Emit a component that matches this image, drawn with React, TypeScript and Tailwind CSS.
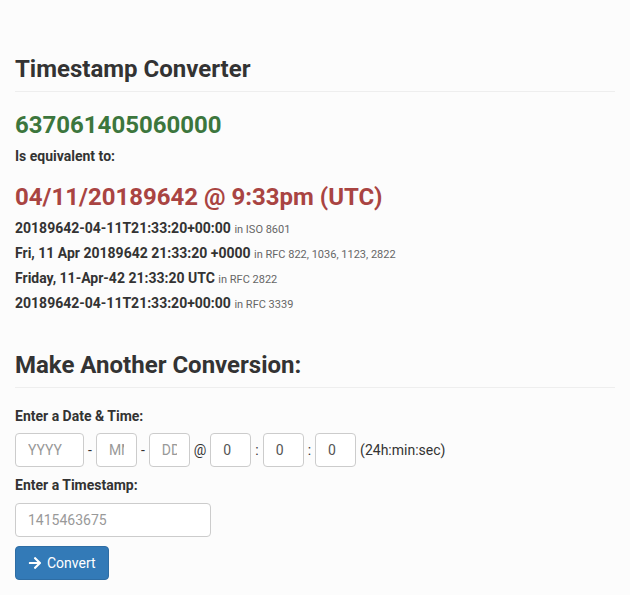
import React from 'react';
import { FaArrowRight } from 'react-icons/fa';

const FORMATS = [
  { value: '20189642-04-11T21:33:20+00:00', note: 'in ISO 8601' },
  { value: 'Fri, 11 Apr 20189642 21:33:20 +0000', note: 'in RFC 822, 1036, 1123, 2822' },
  { value: 'Friday, 11-Apr-42 21:33:20 UTC', note: 'in RFC 2822' },
  { value: '20189642-04-11T21:33:20+00:00', note: 'in RFC 3339' }
];

const inputClass =
  'h-[34px] rounded-[4px] border border-[#ccc] bg-white px-3 text-[14px] text-[#555] placeholder:text-[#999] outline-none';

export default function App() {
  return (
    <div className="min-h-screen bg-[#fcfcfc] px-[15px] font-['Roboto',sans-serif] text-[#333]">
      {/* result */}
      <h2 className="pt-[56px] text-[24px] font-bold leading-[26px]">Timestamp Converter</h2>
      <div className="mt-[9px] border-t border-[#eee]" />

      <div className="mt-[20px] text-[24px] font-bold leading-[26px] text-[#3c763d]">637061405060000</div>
      <div className="mt-[9px] text-[14px] font-bold leading-[18px]">Is equivalent to:</div>

      <div className="mt-[19px] text-[24px] font-bold leading-[26px] text-[#a94442]">
        04/11/20189642 @ 9:33pm (UTC)
      </div>

      <div className="mt-[6px]">
        {FORMATS.map((f, i) => (
          <div key={i} className="h-[25px] text-[14px] leading-[25px]">
            <span className="font-bold">{f.value}</span>{' '}
            <span className="text-[11px] leading-none text-[#666]">{f.note}</span>
          </div>
        ))}
      </div>

      {/* form */}
      <h2 className="mt-[36px] text-[24px] font-bold leading-[26px]">Make Another Conversion:</h2>
      <div className="mt-[9px] border-t border-[#eee]" />

      <div className="mt-[19px] text-[14px] font-bold leading-[18px]">Enter a Date &amp; Time:</div>
      <div className="mt-[8px] flex items-center gap-[4px] text-[14px]">
        <input className={`${inputClass} w-[69px]`} placeholder="YYYY" />
        <span>-</span>
        <input className={`${inputClass} w-[41px]`} placeholder="MM" />
        <span>-</span>
        <input className={`${inputClass} w-[41px]`} placeholder="DD" />
        <span>@</span>
        <input className={`${inputClass} w-[41px]`} defaultValue="0" />
        <span>:</span>
        <input className={`${inputClass} w-[41px]`} defaultValue="0" />
        <span>:</span>
        <input className={`${inputClass} w-[41px]`} defaultValue="0" />
        <span>(24h:min:sec)</span>
      </div>

      <div className="mt-[9px] text-[14px] font-bold leading-[18px]">Enter a Timestamp:</div>
      <input className={`${inputClass} mt-[9px] block w-[196px]`} placeholder="1415463675" />

      <button className="mt-[9px] flex h-[34px] items-center gap-[5px] rounded-[4px] border border-[#2e6da4] bg-[#337ab7] px-[12px] text-[14px] text-white">
        <FaArrowRight className="h-[14px] w-[14px]" />
        Convert
      </button>
    </div>
  );
}
